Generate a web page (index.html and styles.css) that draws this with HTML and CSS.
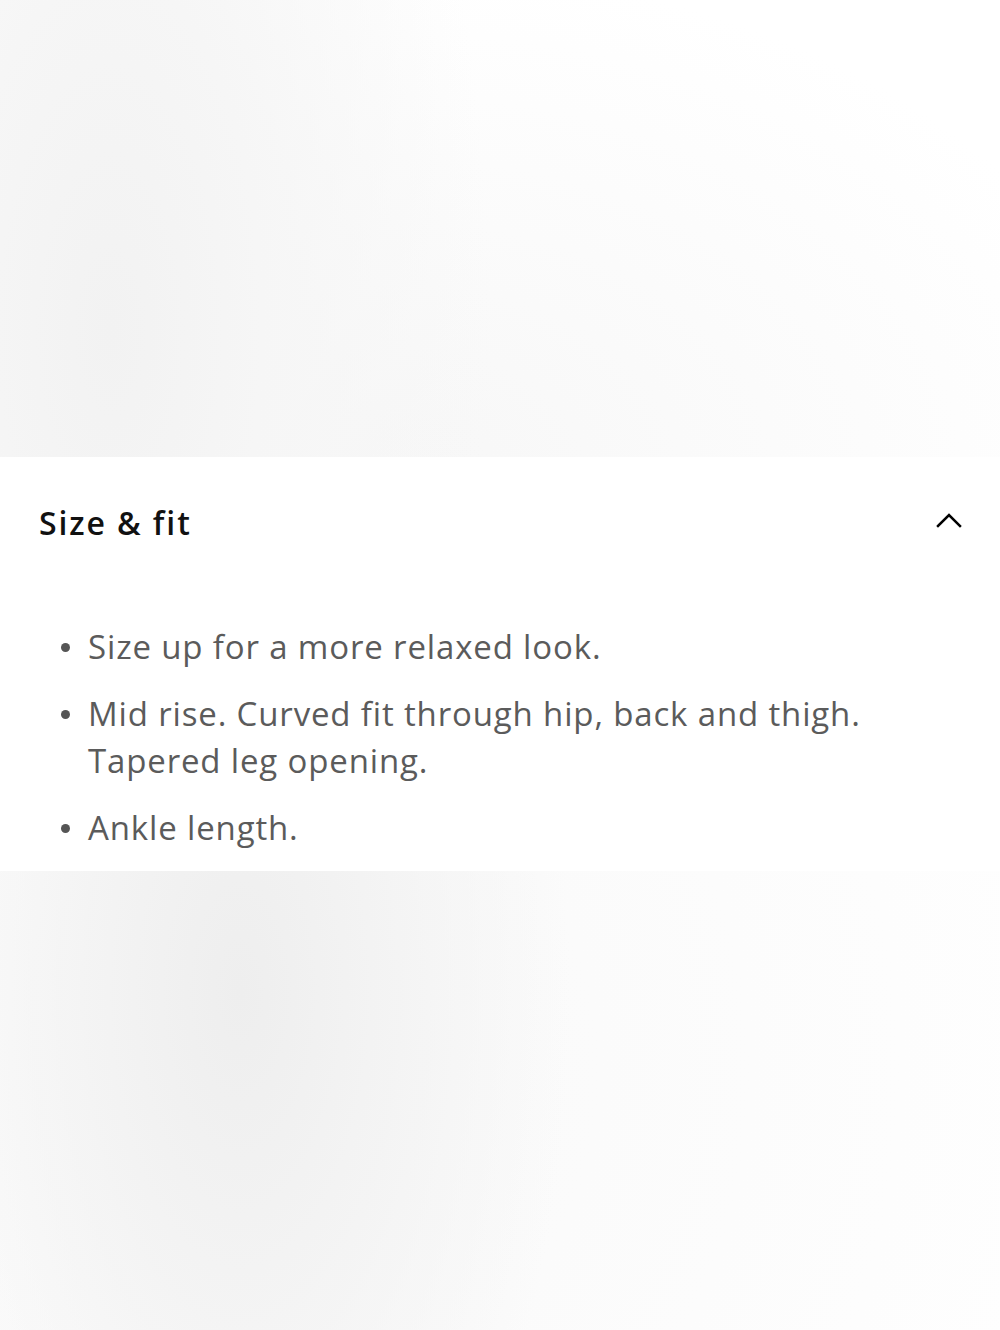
FILE: index.html
```html
<!DOCTYPE html>
<html lang="en">
<head>
<meta charset="utf-8">
<title>Size &amp; fit</title>
<link rel="stylesheet" href="styles.css">
</head>
<body>
<div class="media media-top"></div>
<section class="panel">
  <div class="panel-head">
    <h2 class="panel-title">Size &amp; fit</h2>
    <svg class="chev" width="28" height="20" viewBox="0 0 28 20" aria-hidden="true">
      <polyline points="3,16 14,5 25,16" fill="none" stroke="#000" stroke-width="2.5" stroke-linecap="square"/>
    </svg>
  </div>
  <ul class="fit-list">
    <li>Size up for a more relaxed look.</li>
    <li>Mid rise. Curved fit through hip, back and thigh. Tapered leg opening.</li>
    <li>Ankle length.</li>
  </ul>
</section>
<div class="media media-bottom"></div>
</body>
</html>
```

FILE: styles.css
```css
* { box-sizing: border-box; }
html, body { margin: 0; padding: 0; background: #fff; }
body { font-family: "Open Sans", "Noto Sans", sans-serif; }

.media { width: 100%; }
.media-top {
  height: 457px;
  background:
    radial-gradient(ellipse 380px 900px at 110px 330px, #f2f2f2 0%, #f6f6f6 40%, rgba(255,255,255,0) 100%),
    radial-gradient(ellipse 750px 500px at 400px 470px, #f7f7f7 0%, rgba(255,255,255,0) 100%),
    #fff;
}
.media-bottom {
  height: 459px;
  background:
    radial-gradient(ellipse 330px 700px at 240px 120px, #eeeeee 0%, #f3f3f3 40%, rgba(250,250,250,0) 100%),
    radial-gradient(ellipse 900px 1000px at 300px 200px, #f9f9f9 0%, rgba(255,255,255,0) 100%),
    #fff;
}

.panel { background: #fff; padding: 0 37px 20px 39px; }
.panel-head {
  height: 130px;
  display: flex;
  align-items: center;
  justify-content: space-between;
}
.panel-title {
  margin: 0;
  font-size: 32px;
  font-weight: 600;
  color: #111;
  letter-spacing: 1.9px;
}
.chev { display: block; margin-top: -4px; }

.fit-list {
  margin: 36px 0 0 0;
  padding: 0 0 0 49px;
  list-style: none;
  color: #5b5b5b;
  font-size: 33px;
  line-height: 47px;
  letter-spacing: 0.85px;
}
.fit-list li { position: relative; margin-bottom: 20px; padding-right: 40px; }
.fit-list li:last-child { margin-bottom: 0; }
.fit-list li::before {
  content: "";
  position: absolute;
  left: -27px;
  top: 20px;
  width: 9px;
  height: 9px;
  border-radius: 50%;
  background: #555;
}
```
